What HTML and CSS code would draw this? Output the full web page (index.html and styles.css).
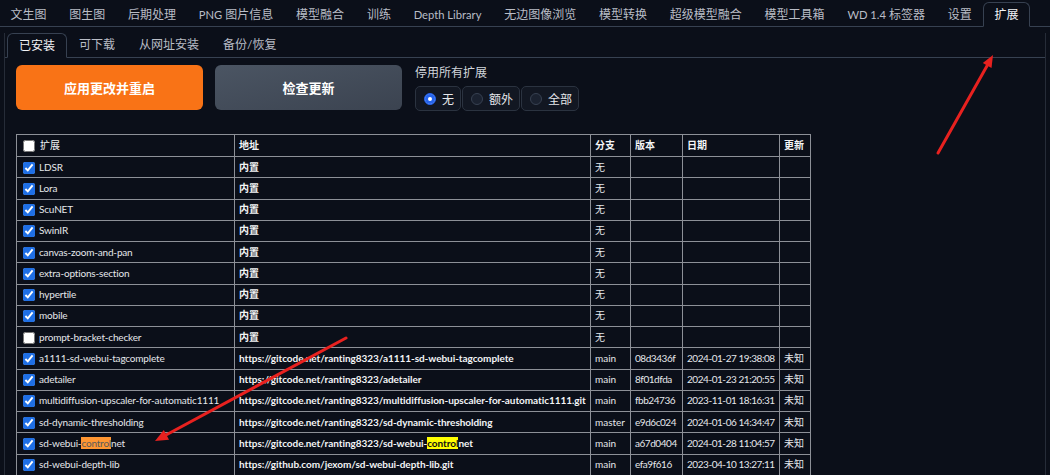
FILE: index.html
```html
<!DOCTYPE html>
<html lang="zh">
<head>
<meta charset="utf-8">
<title>扩展</title>
<link rel="stylesheet" href="styles.css">
</head>
<body>
<div class="app">
  <nav class="tabs">
    <div class="tab">文生图</div>
    <div class="tab">图生图</div>
    <div class="tab">后期处理</div>
    <div class="tab"><span class="lat">PNG</span> 图片信息</div>
    <div class="tab">模型融合</div>
    <div class="tab">训练</div>
    <div class="tab"><span class="lat">Depth Library</span></div>
    <div class="tab">无边图像浏览</div>
    <div class="tab">模型转换</div>
    <div class="tab">超级模型融合</div>
    <div class="tab">模型工具箱</div>
    <div class="tab"><span class="lat">WD 1.4</span> 标签器</div>
    <div class="tab">设置</div>
    <div class="tab active">扩展</div>
  </nav>
  <section class="panel">
    <nav class="subtabs">
      <div class="subtab active">已安装</div>
      <div class="subtab">可下载</div>
      <div class="subtab">从网址安装</div>
      <div class="subtab">备份/恢复</div>
    </nav>
    <div class="content">
      <div class="controls">
        <button class="btn primary">应用更改并重启</button>
        <button class="btn secondary">检查更新</button>
        <div class="radio-block">
          <div class="radio-label">停用所有扩展</div>
          <div class="radio-group">
            <label class="radio on"><span class="dot"></span>无</label>
            <label class="radio"><span class="dot"></span>额外</label>
            <label class="radio"><span class="dot"></span>全部</label>
          </div>
        </div>
      </div>
      <table class="ext">
        <colgroup>
          <col class="c1"><col class="c2"><col class="c3"><col class="c4"><col class="c5"><col class="c6">
        </colgroup>
        <thead>
          <tr>
            <th class="name"><input type="checkbox"><span class="th-ext">扩展</span></th>
            <th>地址</th><th>分支</th><th>版本</th><th>日期</th><th>更新</th>
          </tr>
        </thead>
        <tbody>
          <tr><td class="name"><input type="checkbox" checked>LDSR</td><td class="url">内置</td><td>无</td><td></td><td></td><td></td></tr>
          <tr><td class="name"><input type="checkbox" checked>Lora</td><td class="url">内置</td><td>无</td><td></td><td></td><td></td></tr>
          <tr><td class="name"><input type="checkbox" checked>ScuNET</td><td class="url">内置</td><td>无</td><td></td><td></td><td></td></tr>
          <tr><td class="name"><input type="checkbox" checked>SwinIR</td><td class="url">内置</td><td>无</td><td></td><td></td><td></td></tr>
          <tr><td class="name"><input type="checkbox" checked>canvas-zoom-and-pan</td><td class="url">内置</td><td>无</td><td></td><td></td><td></td></tr>
          <tr><td class="name"><input type="checkbox" checked>extra-options-section</td><td class="url">内置</td><td>无</td><td></td><td></td><td></td></tr>
          <tr><td class="name"><input type="checkbox" checked>hypertile</td><td class="url">内置</td><td>无</td><td></td><td></td><td></td></tr>
          <tr><td class="name"><input type="checkbox" checked>mobile</td><td class="url">内置</td><td>无</td><td></td><td></td><td></td></tr>
          <tr><td class="name"><input type="checkbox">prompt-bracket-checker</td><td class="url">内置</td><td>无</td><td></td><td></td><td></td></tr>
          <tr><td class="name"><input type="checkbox" checked>a1111-sd-webui-tagcomplete</td><td class="url">https://gitcode.net/ranting8323/a1111-sd-webui-tagcomplete</td><td>main</td><td class="num">08d3436f</td><td class="num">2024-01-27 19:38:08</td><td>未知</td></tr>
          <tr><td class="name"><input type="checkbox" checked>adetailer</td><td class="url">https://gitcode.net/ranting8323/adetailer</td><td>main</td><td class="num">8f01dfda</td><td class="num">2024-01-23 21:20:55</td><td>未知</td></tr>
          <tr><td class="name"><input type="checkbox" checked>multidiffusion-upscaler-for-automatic1111</td><td class="url">https://gitcode.net/ranting8323/multidiffusion-upscaler-for-automatic1111.git</td><td>main</td><td class="num">fbb24736</td><td class="num">2023-11-01 18:16:31</td><td>未知</td></tr>
          <tr><td class="name"><input type="checkbox" checked>sd-dynamic-thresholding</td><td class="url">https://gitcode.net/ranting8323/sd-dynamic-thresholding</td><td>master</td><td class="num">e9d6c024</td><td class="num">2024-01-06 14:34:47</td><td>未知</td></tr>
          <tr><td class="name"><input type="checkbox" checked>sd-webui-<mark class="cur">control</mark>net</td><td class="url">https://gitcode.net/ranting8323/sd-webui-<mark class="hit">control</mark>net</td><td>main</td><td class="num">a67d0404</td><td class="num">2024-01-28 11:04:57</td><td>未知</td></tr>
          <tr><td class="name"><input type="checkbox" checked>sd-webui-depth-lib</td><td class="url">https://github.com/jexom/sd-webui-depth-lib.git</td><td>main</td><td class="num">efa9f616</td><td class="num">2023-04-10 13:27:11</td><td>未知</td></tr>
        </tbody>
      </table>
    </div>
  </section>
</div>
<svg class="overlay" width="1050" height="475" viewBox="0 0 1050 475">
  <line x1="938" y1="153" x2="987.5" y2="65" stroke="#e8211f" stroke-width="3" stroke-linecap="round"/>
  <polygon points="993,55 991.5,67.9 982.8,63" fill="#e8211f"/>
  <line x1="346" y1="338" x2="166" y2="435" stroke="#e8211f" stroke-width="3" stroke-linecap="round"/>
  <polygon points="155,441 169,439.7 163.8,430" fill="#e8211f"/>
</svg>
</body>
</html>
```
FILE: styles.css
```css
html, body {
  margin: 0;
  padding: 0;
  background: #0b0f19;
  overflow: hidden;
}
body {
  width: 1050px;
  height: 475px;
  position: relative;
  font-family: "Lato", "Noto Sans CJK SC", sans-serif;
  color: #e5e7eb;
}
.tabs {
  display: flex;
  height: 26px;
  border-bottom: 1px solid #374151;
  margin-left: -1px;
}
.tab {
  padding: 0 11.4px;
  font-size: 12px;
  line-height: 24px;
  margin-top: 3px;
  color: #b9bdc6;
  white-space: nowrap;
}
.tab .lat {
  font-size: 11.2px;
}
.tab.active {
  color: #f3f4f6;
  border: 1px solid #374151;
  border-bottom-color: #0b0f19;
  border-radius: 6px 6px 0 0;
  margin-top: 2px;
  margin-bottom: -1px;
  padding: 0 10.4px;
  background: #0b0f19;
}
.panel {
  margin: 0 4px;
  border-left: 1px solid #262c38;
  border-right: 1px solid #262c38;
  height: 448px;
}
.subtabs {
  display: flex;
  margin-top: 6px;
  padding-left: 2px;
  height: 24px;
  border-bottom: 1px solid #374151;
}
.subtab {
  padding: 0 12px;
  font-size: 12px;
  line-height: 24px;
  color: #b9bdc6;
  white-space: nowrap;
}
.subtab.active {
  color: #f3f4f6;
  border: 1px solid #374151;
  border-bottom-color: #0b0f19;
  border-radius: 6px 6px 0 0;
  padding: 0 11px;
  line-height: 23px;
  margin-bottom: -1px;
  background: #0b0f19;
}
.content {
  padding: 7px 0 0 11px;
}
.controls {
  display: flex;
  align-items: flex-start;
}
.btn {
  width: 187px;
  height: 45px;
  border: none;
  border-radius: 6px;
  color: #ffffff;
  font-family: "Lato", "Noto Sans CJK SC", sans-serif;
  font-size: 13px;
  font-weight: bold;
  margin-right: 12px;
  padding: 0;
}
.btn.primary {
  background: #f97316;
}
.btn.secondary {
  background: linear-gradient(to bottom right, #4b5563, #3b4350);
}
.radio-block {
  margin-left: 1px;
}
.radio-label {
  font-size: 12px;
  line-height: 14px;
  margin-top: 1px;
  margin-bottom: 6px;
  color: #d1d5db;
}
.radio-group {
  display: flex;
  gap: 1px;
}
.radio {
  display: flex;
  align-items: center;
  gap: 6px;
  height: 23px;
  padding: 0 6px 0 8px;
  border: 1px solid #2b3340;
  border-radius: 5px;
  background: #121722;
  font-size: 12px;
  color: #e5e7eb;
}
.dot {
  width: 10px;
  height: 10px;
  border-radius: 50%;
  border: 1px solid #374151;
  background: #1b2230;
  box-sizing: content-box;
}
.radio.on .dot {
  background: #2563eb;
  border-color: #2563eb;
  box-shadow: inset 0 0 0 3px #2563eb, inset 0 0 0 10px #ffffff;
}
.ext {
  margin-top: 23px;
  border-collapse: collapse;
  table-layout: fixed;
  width: 794px;
  font-size: 10px;
}
.c1 { width: 218px; }
.c2 { width: 356px; }
.c3 { width: 40px; }
.c4 { width: 52px; }
.c5 { width: 97px; }
.c6 { width: 31px; }
.ext th, .ext td {
  border: 1px solid #8d9097;
  text-align: left;
  white-space: nowrap;
  overflow: hidden;
}
.ext th {
  padding: 2.5px 4px 3.5px;
  line-height: 15px;
  font-weight: bold;
  color: #f3f4f6;
}
.ext td {
  padding: 2.5px 4px 3.5px;
  line-height: 14.25px;
  color: #e5e7eb;
}
.ext td.num {
  letter-spacing: -0.45px;
}
.ext td.name {
  padding-left: 6px;
  letter-spacing: -0.18px;
}
.ext th.name {
  padding-left: 6px;
}
.ext td.url {
  font-weight: bold;
  color: #f3f4f6;
  letter-spacing: -0.05px;
}
.ext th .th-ext {
  font-weight: normal;
  margin-left: 1px;
}
.ext input[type="checkbox"] {
  width: 12px;
  height: 12px;
  margin: 0 4px 0 0;
  vertical-align: -3px;
  accent-color: #1f6fe5;
}
mark {
  padding: 0;
}
mark.cur {
  background: #ff9632;
  color: #5a5a5a;
}
mark.hit {
  background: #ffff00;
  color: #111111;
}
.overlay {
  position: absolute;
  left: 0;
  top: 0;
  pointer-events: none;
}
```
